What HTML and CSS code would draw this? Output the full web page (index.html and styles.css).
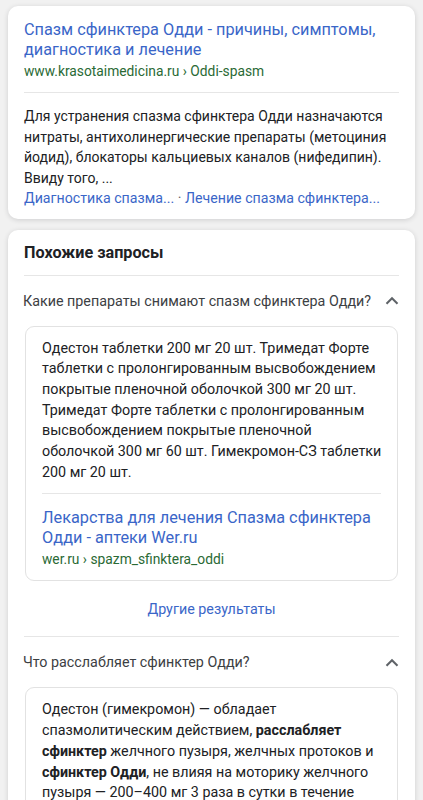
FILE: index.html
```html
<!DOCTYPE html>
<html lang="ru">
<head>
<meta charset="utf-8">
<title>Спазм сфинктера Одди</title>
<link rel="stylesheet" href="styles.css">
</head>
<body>
<div class="page">
  <section class="card result">
    <a class="title">Спазм сфинктера Одди - причины, симптомы, диагностика и лечение</a>
    <div class="url">www.krasotaimedicina.ru › Oddi-spasm</div>
    <hr class="divider">
    <p class="snippet">Для устранения спазма сфинктера Одди назначаются<br>нитраты, антихолинергические препараты (метоциния<br>йодид), блокаторы кальциевых каналов (нифедипин).<br>Ввиду того, ...</p>
    <div class="sitelinks"><a>Диагностика спазма...</a> · <a>Лечение спазма сфинктера...</a></div>
  </section>

  <section class="card related">
    <h2 class="heading">Похожие запросы</h2>
    <hr class="divider">
    <div class="question">
      <span>Какие препараты снимают спазм сфинктера Одди?</span>
      <svg class="chev" width="14" height="9" viewBox="0 0 14 9"><polyline points="1.5,7.8 7,2.3 12.5,7.8" fill="none" stroke="#5f6368" stroke-width="2.1"/></svg>
    </div>
    <div class="answer">
      <p class="answer-text">Одестон таблетки 200 мг 20 шт. Тримедат Форте<br>таблетки с пролонгированным высвобождением<br>покрытые пленочной оболочкой 300 мг 20 шт.<br>Тримедат Форте таблетки с пролонгированным<br>высвобождением покрытые пленочной<br>оболочкой 300 мг 60 шт. Гимекромон-СЗ таблетки<br>200 мг 20 шт.</p>
      <hr class="divider inner">
      <a class="title">Лекарства для лечения Спазма сфинктера Одди - аптеки Wer.ru</a>
      <div class="url">wer.ru › spazm_sfinktera_oddi</div>
    </div>
    <div class="more"><a>Другие результаты</a></div>
    <hr class="divider">
    <div class="question">
      <span>Что расслабляет сфинктер Одди?</span>
      <svg class="chev" width="14" height="9" viewBox="0 0 14 9"><polyline points="1.5,7.8 7,2.3 12.5,7.8" fill="none" stroke="#5f6368" stroke-width="2.1"/></svg>
    </div>
    <div class="answer">
      <p class="answer-text">Одестон (гимекромон) — обладает<br>спазмолитическим действием, <b>расслабляет</b><br><b>сфинктер</b> желчного пузыря, желчных протоков и<br><b>сфинктер Одди</b>, не влияя на моторику желчного<br>пузыря — 200–400 мг 3 раза в сутки в течение</p>
    </div>
  </section>
</div>
</body>
</html>
```

FILE: styles.css
```css
* { box-sizing: border-box; }
html, body {
  margin: 0;
  padding: 0;
  background: #f1f1f1;
}
body {
  font-family: Roboto, "Noto Sans", "Liberation Sans", sans-serif;
  color: #202124;
}
.page {
  display: flex;
  flex-direction: column;
  gap: 11px;
  padding: 6px 8px 0;
}
.card {
  background: #fff;
  border-radius: 10px;
  box-shadow: 0 1px 5px rgba(32, 33, 36, 0.16);
  padding: 0 16px;
}
.result {
  padding-top: 14px;
  padding-bottom: 10px;
}
.title {
  display: block;
  color: #3a66c8;
  font-size: 16.3px;
  line-height: 20px;
  text-decoration: none;
}
.url {
  color: #2a6a35;
  font-size: 13.8px;
  line-height: 20px;
  margin-top: 1px;
}
.divider {
  border: 0;
  border-top: 1px solid #e6e6e6;
  margin: 11px 0 0;
  height: 0;
}
.snippet {
  margin: 13px 0 0;
  font-size: 14px;
  line-height: 20.5px;
  white-space: nowrap;
}
.sitelinks {
  font-size: 14.2px;
  line-height: 20.5px;
  color: #5f6368;
  white-space: nowrap;
}
.sitelinks a {
  color: #3a66c8;
}
.related {
  padding-top: 11px;
}
.heading {
  margin: 0;
  font-size: 16.2px;
  line-height: 24px;
  font-weight: 700;
  color: #202124;
}
.related > .divider {
  margin-top: 10px;
}
.question {
  display: flex;
  align-items: center;
  justify-content: space-between;
  height: 50px;
  font-size: 14.3px;
  color: #3c4043;
  margin-left: -1px;
}
.chev {
  flex: none;
}
.answer {
  border: 1px solid #e2e2e2;
  border-radius: 9px;
  margin: 0 1px;
  padding: 11px 16px 11px;
}
.answer-text {
  margin: 0;
  font-size: 14.3px;
  line-height: 20.7px;
  color: #202124;
  white-space: nowrap;
}
.answer-text b {
  font-weight: 700;
}
.divider.inner {
  margin-top: 11px;
  margin-bottom: 14px;
}
.more {
  display: flex;
  align-items: center;
  justify-content: center;
  height: 55px;
  font-size: 14.3px;
}
.more a {
  color: #3a66c8;
}
.more + .divider {
  margin-top: 0;
}
```
